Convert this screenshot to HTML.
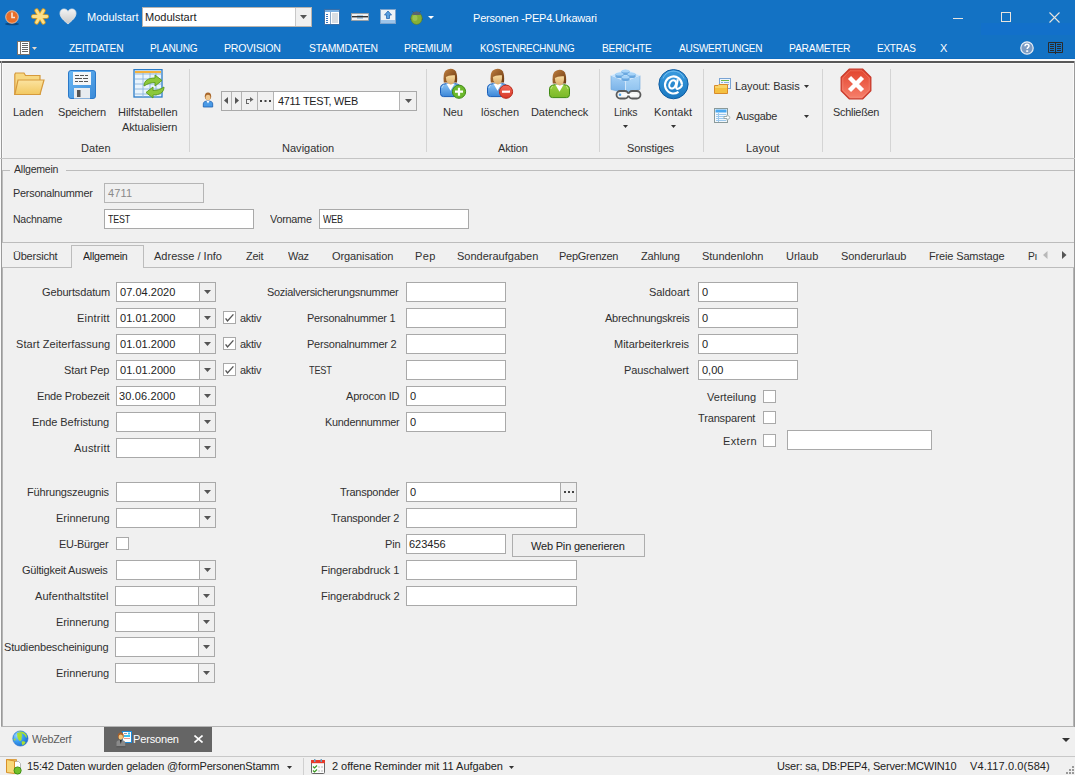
<!DOCTYPE html>
<html><head><meta charset="utf-8"><style>
html,body{margin:0;padding:0;width:1075px;height:775px;overflow:hidden;background:#f0f0f0;position:relative}
div{box-sizing:border-box}
.t{position:absolute;font-family:"Liberation Sans",sans-serif;font-size:11px;line-height:13px;white-space:nowrap}
svg{position:absolute}
</style></head><body>
<div style="position:absolute;left:0px;top:0px;width:1075px;height:59px;background:#1372c4"></div><div style="position:absolute;left:0px;top:58px;width:1075px;height:1px;background:#0f6cc0"></div><div style="position:absolute;left:981px;top:23px;width:94px;height:12px;background:#1270ca"></div><div style="position:absolute;left:0px;top:59px;width:1075px;height:2px;background:#fcfcfc"></div><div style="position:absolute;left:0px;top:61px;width:1075px;height:2px;background:#585858"></div><div style="position:absolute;left:0px;top:63px;width:1075px;height:1px;background:#f8f8f8"></div><div style="position:absolute;left:0px;top:63px;width:1px;height:664px;background:#fafafa"></div><div style="position:absolute;left:1px;top:61px;width:1px;height:666px;background:#9a9a9a"></div><div style="position:absolute;left:2px;top:63px;width:1px;height:95px;background:#f8f8f8"></div><div style="position:absolute;left:1074px;top:61px;width:1px;height:666px;background:#9a9a9a"></div><div style="position:absolute;left:1073px;top:63px;width:1px;height:95px;background:#f8f8f8"></div><div style="position:absolute;left:142px;top:7px;width:170px;height:20px;background:#fff;border:1px solid #b9b4ae;box-sizing:border-box"></div><div style="position:absolute;left:295px;top:8px;width:16px;height:18px;background:#f0f0f0;border-left:1px solid #c8c8c8;box-sizing:border-box"></div><svg style="position:absolute;left:300px;top:15px" width="7" height="4"><path d="M0 0H7L3.5 4Z" fill="#555"/></svg><div style="position:absolute;left:953px;top:18px;width:10px;height:1px;background:#e8e4df"></div><div style="position:absolute;left:1001px;top:12px;width:10px;height:10px;border:1px solid #e8e4df;box-sizing:border-box"></div><svg style="position:absolute;left:1049px;top:12px" width="11" height="11"><path d="M0.5 0.5L10.5 10.5M10.5 0.5L0.5 10.5" stroke="#e8e4df" stroke-width="1.1"/></svg><div style="position:absolute;left:0px;top:158px;width:1075px;height:1px;background:#c4c4c4"></div><div style="position:absolute;left:189px;top:69px;width:1px;height:83px;background:#d4d4d4"></div><div style="position:absolute;left:426px;top:69px;width:1px;height:83px;background:#d4d4d4"></div><div style="position:absolute;left:599px;top:69px;width:1px;height:83px;background:#d4d4d4"></div><div style="position:absolute;left:703px;top:69px;width:1px;height:83px;background:#d4d4d4"></div><div style="position:absolute;left:822px;top:69px;width:1px;height:83px;background:#d4d4d4"></div><div style="position:absolute;left:890px;top:69px;width:1px;height:83px;background:#d4d4d4"></div><div style="position:absolute;left:221px;top:91px;width:196px;height:20px;background:#fff;border:1px solid #a9a9a9;box-sizing:border-box"></div><div style="position:absolute;left:222px;top:92px;width:51px;height:18px;background:#f0f0f0"></div><div style="position:absolute;left:231px;top:92px;width:1px;height:18px;background:#b4b4b4"></div><div style="position:absolute;left:241px;top:92px;width:1px;height:18px;background:#b4b4b4"></div><div style="position:absolute;left:257px;top:92px;width:1px;height:18px;background:#b4b4b4"></div><div style="position:absolute;left:273px;top:92px;width:1px;height:18px;background:#b4b4b4"></div><div style="position:absolute;left:399px;top:92px;width:1px;height:18px;background:#b4b4b4"></div><div style="position:absolute;left:400px;top:92px;width:16px;height:18px;background:#f0f0f0"></div><div style="position:absolute;left:2px;top:170px;width:8px;height:1px;background:#bcbcbc"></div><div style="position:absolute;left:66px;top:170px;width:1008px;height:1px;background:#bcbcbc"></div><div style="position:absolute;left:2px;top:170px;width:1px;height:73px;background:#bcbcbc"></div><div style="position:absolute;left:2px;top:242px;width:1072px;height:1px;background:#bcbcbc"></div><div style="position:absolute;left:104px;top:183px;width:100px;height:20px;background:#f0f0f0;border:1px solid #b5b5b5;box-sizing:border-box"></div><div style="position:absolute;left:104px;top:209px;width:150px;height:20px;background:#fff;border:1px solid #a9a9a9;box-sizing:border-box"></div><div style="position:absolute;left:319px;top:209px;width:150px;height:20px;background:#fff;border:1px solid #a9a9a9;box-sizing:border-box"></div><div style="position:absolute;left:2px;top:267px;width:1072px;height:1px;background:#bcbcbc"></div><div style="position:absolute;left:71px;top:245px;width:73px;height:23px;background:#f0f0f0;border:1px solid #bcbcbc;border-bottom:none;box-sizing:border-box"></div><svg style="position:absolute;left:1043px;top:251px" width="5" height="8"><path d="M4.5 0V8L0 4Z" fill="#b8b8b8"/></svg><svg style="position:absolute;left:1062px;top:251px" width="5" height="8"><path d="M0 0V8L4.5 4Z" fill="#555"/></svg><div style="position:absolute;left:2px;top:268px;width:1px;height:459px;background:#b4b4b4"></div><div style="position:absolute;left:1073px;top:268px;width:1px;height:459px;background:#b4b4b4"></div><div style="position:absolute;left:1px;top:726px;width:1073px;height:1px;background:#b4b4b4"></div><div style="position:absolute;left:116px;top:282px;width:100px;height:20px;background:#fff;border:1px solid #a9a9a9;box-sizing:border-box"></div><div style="position:absolute;left:199px;top:283px;width:16px;height:18px;background:#f0f0f0;border-left:1px solid #a9a9a9;box-sizing:border-box"></div><svg style="position:absolute;left:204px;top:290px" width="7" height="4"><path d="M0 0H7L3.5 4Z" fill="#555"/></svg><div style="position:absolute;left:116px;top:308px;width:100px;height:20px;background:#fff;border:1px solid #a9a9a9;box-sizing:border-box"></div><div style="position:absolute;left:199px;top:309px;width:16px;height:18px;background:#f0f0f0;border-left:1px solid #a9a9a9;box-sizing:border-box"></div><svg style="position:absolute;left:204px;top:316px" width="7" height="4"><path d="M0 0H7L3.5 4Z" fill="#555"/></svg><div style="position:absolute;left:223px;top:311px;width:13px;height:13px;background:#fff;border:1px solid #a9a9a9;box-sizing:border-box"></div><svg style="position:absolute;left:223px;top:311px" width="13" height="13"><path d="M2.6 7.4L4.5 9.9L10.4 3.4" stroke="#555" stroke-width="1.4" fill="none"/></svg><div style="position:absolute;left:116px;top:334px;width:100px;height:20px;background:#fff;border:1px solid #a9a9a9;box-sizing:border-box"></div><div style="position:absolute;left:199px;top:335px;width:16px;height:18px;background:#f0f0f0;border-left:1px solid #a9a9a9;box-sizing:border-box"></div><svg style="position:absolute;left:204px;top:342px" width="7" height="4"><path d="M0 0H7L3.5 4Z" fill="#555"/></svg><div style="position:absolute;left:223px;top:337px;width:13px;height:13px;background:#fff;border:1px solid #a9a9a9;box-sizing:border-box"></div><svg style="position:absolute;left:223px;top:337px" width="13" height="13"><path d="M2.6 7.4L4.5 9.9L10.4 3.4" stroke="#555" stroke-width="1.4" fill="none"/></svg><div style="position:absolute;left:116px;top:360px;width:100px;height:20px;background:#fff;border:1px solid #a9a9a9;box-sizing:border-box"></div><div style="position:absolute;left:199px;top:361px;width:16px;height:18px;background:#f0f0f0;border-left:1px solid #a9a9a9;box-sizing:border-box"></div><svg style="position:absolute;left:204px;top:368px" width="7" height="4"><path d="M0 0H7L3.5 4Z" fill="#555"/></svg><div style="position:absolute;left:223px;top:363px;width:13px;height:13px;background:#fff;border:1px solid #a9a9a9;box-sizing:border-box"></div><svg style="position:absolute;left:223px;top:363px" width="13" height="13"><path d="M2.6 7.4L4.5 9.9L10.4 3.4" stroke="#555" stroke-width="1.4" fill="none"/></svg><div style="position:absolute;left:116px;top:386px;width:100px;height:20px;background:#fff;border:1px solid #a9a9a9;box-sizing:border-box"></div><div style="position:absolute;left:199px;top:387px;width:16px;height:18px;background:#f0f0f0;border-left:1px solid #a9a9a9;box-sizing:border-box"></div><svg style="position:absolute;left:204px;top:394px" width="7" height="4"><path d="M0 0H7L3.5 4Z" fill="#555"/></svg><div style="position:absolute;left:116px;top:412px;width:100px;height:20px;background:#fff;border:1px solid #a9a9a9;box-sizing:border-box"></div><div style="position:absolute;left:199px;top:413px;width:16px;height:18px;background:#f0f0f0;border-left:1px solid #a9a9a9;box-sizing:border-box"></div><svg style="position:absolute;left:204px;top:420px" width="7" height="4"><path d="M0 0H7L3.5 4Z" fill="#555"/></svg><div style="position:absolute;left:116px;top:438px;width:100px;height:20px;background:#fff;border:1px solid #a9a9a9;box-sizing:border-box"></div><div style="position:absolute;left:199px;top:439px;width:16px;height:18px;background:#f0f0f0;border-left:1px solid #a9a9a9;box-sizing:border-box"></div><svg style="position:absolute;left:204px;top:446px" width="7" height="4"><path d="M0 0H7L3.5 4Z" fill="#555"/></svg><div style="position:absolute;left:406px;top:282px;width:100px;height:20px;background:#fff;border:1px solid #a9a9a9;box-sizing:border-box"></div><div style="position:absolute;left:406px;top:308px;width:100px;height:20px;background:#fff;border:1px solid #a9a9a9;box-sizing:border-box"></div><div style="position:absolute;left:406px;top:334px;width:100px;height:20px;background:#fff;border:1px solid #a9a9a9;box-sizing:border-box"></div><div style="position:absolute;left:406px;top:360px;width:100px;height:20px;background:#fff;border:1px solid #a9a9a9;box-sizing:border-box"></div><div style="position:absolute;left:406px;top:386px;width:100px;height:20px;background:#fff;border:1px solid #a9a9a9;box-sizing:border-box"></div><div style="position:absolute;left:406px;top:412px;width:100px;height:20px;background:#fff;border:1px solid #a9a9a9;box-sizing:border-box"></div><div style="position:absolute;left:698px;top:282px;width:100px;height:20px;background:#fff;border:1px solid #a9a9a9;box-sizing:border-box"></div><div style="position:absolute;left:698px;top:308px;width:100px;height:20px;background:#fff;border:1px solid #a9a9a9;box-sizing:border-box"></div><div style="position:absolute;left:698px;top:334px;width:100px;height:20px;background:#fff;border:1px solid #a9a9a9;box-sizing:border-box"></div><div style="position:absolute;left:698px;top:360px;width:100px;height:20px;background:#fff;border:1px solid #a9a9a9;box-sizing:border-box"></div><div style="position:absolute;left:763px;top:390px;width:13px;height:13px;background:#fff;border:1px solid #a9a9a9;box-sizing:border-box"></div><div style="position:absolute;left:763px;top:411px;width:13px;height:13px;background:#fff;border:1px solid #a9a9a9;box-sizing:border-box"></div><div style="position:absolute;left:763px;top:434px;width:13px;height:13px;background:#fff;border:1px solid #a9a9a9;box-sizing:border-box"></div><div style="position:absolute;left:787px;top:430px;width:145px;height:20px;background:#fff;border:1px solid #a9a9a9;box-sizing:border-box"></div><div style="position:absolute;left:116px;top:482px;width:100px;height:20px;background:#fff;border:1px solid #a9a9a9;box-sizing:border-box"></div><div style="position:absolute;left:199px;top:483px;width:16px;height:18px;background:#f0f0f0;border-left:1px solid #a9a9a9;box-sizing:border-box"></div><svg style="position:absolute;left:204px;top:490px" width="7" height="4"><path d="M0 0H7L3.5 4Z" fill="#555"/></svg><div style="position:absolute;left:116px;top:508px;width:100px;height:20px;background:#fff;border:1px solid #a9a9a9;box-sizing:border-box"></div><div style="position:absolute;left:199px;top:509px;width:16px;height:18px;background:#f0f0f0;border-left:1px solid #a9a9a9;box-sizing:border-box"></div><svg style="position:absolute;left:204px;top:516px" width="7" height="4"><path d="M0 0H7L3.5 4Z" fill="#555"/></svg><div style="position:absolute;left:116px;top:537px;width:13px;height:13px;background:#fff;border:1px solid #a9a9a9;box-sizing:border-box"></div><div style="position:absolute;left:116px;top:560px;width:100px;height:20px;background:#fff;border:1px solid #a9a9a9;box-sizing:border-box"></div><div style="position:absolute;left:199px;top:561px;width:16px;height:18px;background:#f0f0f0;border-left:1px solid #a9a9a9;box-sizing:border-box"></div><svg style="position:absolute;left:204px;top:568px" width="7" height="4"><path d="M0 0H7L3.5 4Z" fill="#555"/></svg><div style="position:absolute;left:115px;top:586px;width:100px;height:20px;background:#fff;border:1px solid #a9a9a9;box-sizing:border-box"></div><div style="position:absolute;left:198px;top:587px;width:16px;height:18px;background:#f0f0f0;border-left:1px solid #a9a9a9;box-sizing:border-box"></div><svg style="position:absolute;left:203px;top:594px" width="7" height="4"><path d="M0 0H7L3.5 4Z" fill="#555"/></svg><div style="position:absolute;left:115px;top:612px;width:100px;height:20px;background:#fff;border:1px solid #a9a9a9;box-sizing:border-box"></div><div style="position:absolute;left:198px;top:613px;width:16px;height:18px;background:#f0f0f0;border-left:1px solid #a9a9a9;box-sizing:border-box"></div><svg style="position:absolute;left:203px;top:620px" width="7" height="4"><path d="M0 0H7L3.5 4Z" fill="#555"/></svg><div style="position:absolute;left:115px;top:637px;width:100px;height:20px;background:#fff;border:1px solid #a9a9a9;box-sizing:border-box"></div><div style="position:absolute;left:198px;top:638px;width:16px;height:18px;background:#f0f0f0;border-left:1px solid #a9a9a9;box-sizing:border-box"></div><svg style="position:absolute;left:203px;top:645px" width="7" height="4"><path d="M0 0H7L3.5 4Z" fill="#555"/></svg><div style="position:absolute;left:115px;top:663px;width:100px;height:20px;background:#fff;border:1px solid #a9a9a9;box-sizing:border-box"></div><div style="position:absolute;left:198px;top:664px;width:16px;height:18px;background:#f0f0f0;border-left:1px solid #a9a9a9;box-sizing:border-box"></div><svg style="position:absolute;left:203px;top:671px" width="7" height="4"><path d="M0 0H7L3.5 4Z" fill="#555"/></svg><div style="position:absolute;left:406px;top:482px;width:171px;height:20px;background:#fff;border:1px solid #a9a9a9;box-sizing:border-box"></div><div style="position:absolute;left:560px;top:483px;width:16px;height:18px;background:#f0f0f0;border-left:1px solid #a9a9a9;box-sizing:border-box"></div><svg style="position:absolute;left:564px;top:491px" width="10" height="2"><rect x="0" y="0" width="2" height="2" fill="#444"/><rect x="4" y="0" width="2" height="2" fill="#444"/><rect x="8" y="0" width="2" height="2" fill="#444"/></svg><div style="position:absolute;left:406px;top:508px;width:171px;height:20px;background:#fff;border:1px solid #a9a9a9;box-sizing:border-box"></div><div style="position:absolute;left:406px;top:534px;width:100px;height:20px;background:#fff;border:1px solid #a9a9a9;box-sizing:border-box"></div><div style="position:absolute;left:406px;top:560px;width:171px;height:20px;background:#fff;border:1px solid #a9a9a9;box-sizing:border-box"></div><div style="position:absolute;left:406px;top:586px;width:171px;height:20px;background:#fff;border:1px solid #a9a9a9;box-sizing:border-box"></div><div style="position:absolute;left:512px;top:534px;width:133px;height:23px;background:#efefef;border:1px solid #adadad;box-sizing:border-box"></div><div style="position:absolute;left:104px;top:727px;width:108px;height:25px;background:#656565"></div><svg style="position:absolute;left:194px;top:735px" width="9" height="8"><path d="M0.5 0.5L8.5 7.5M8.5 0.5L0.5 7.5" stroke="#fff" stroke-width="1.6"/></svg><svg style="position:absolute;left:1062px;top:738px" width="8" height="4"><path d="M0 0H8L4 4Z" fill="#333"/></svg><div style="position:absolute;left:0px;top:756px;width:1075px;height:1px;background:#c8c8c8"></div><svg style="position:absolute;left:287px;top:766px" width="5" height="3"><path d="M0 0H5L2.5 3Z" fill="#333"/></svg><div style="position:absolute;left:303px;top:758px;width:1px;height:17px;background:#d0d0d0"></div><svg style="position:absolute;left:509px;top:766px" width="5" height="3"><path d="M0 0H5L2.5 3Z" fill="#333"/></svg>
<!-- title bar icons -->
<svg style="left:4px;top:9px" width="17" height="17" viewBox="0 0 17 17">
 <ellipse cx="8" cy="15" rx="7" ry="1.3" fill="#0b3f73" opacity="0.8"/>
 <circle cx="8" cy="8" r="6.3" fill="#e96e2a" stroke="#f6d2b6" stroke-width="0.8"/>
 <path d="M8 3.5V8.5H11" stroke="#f5e6dc" stroke-width="1.6" fill="none"/>
</svg>
<svg style="left:31px;top:8px" width="18" height="17" viewBox="0 0 18 17">
 <g stroke="#e0a020" stroke-width="4.4" stroke-linecap="round"><path d="M2.2 8.5H15.8M5.6 2.6L12.4 14.4M12.4 2.6L5.6 14.4"/></g>
 <g stroke="#fbe08a" stroke-width="2.8" stroke-linecap="round"><path d="M2.2 8.5H15.8M5.6 2.6L12.4 14.4M12.4 2.6L5.6 14.4"/></g>
</svg>
<svg style="left:59px;top:8px" width="18" height="17" viewBox="0 0 18 17">
 <defs><linearGradient id="hg" x1="0" y1="0" x2="0" y2="1"><stop offset="0" stop-color="#f4f4f4"/><stop offset="1" stop-color="#c8c8c8"/></linearGradient></defs>
 <path d="M9 16C5 12.5 1 9.5 1 5.2C1 2.5 3 1 5 1C7 1 8.3 2.2 9 3.5C9.7 2.2 11 1 13 1C15 1 17 2.5 17 5.2C17 9.5 13 12.5 9 16Z" fill="url(#hg)" stroke="#e6e6e6" stroke-width="0.8"/>
</svg>
<svg style="left:324px;top:9px" width="16" height="16" viewBox="0 0 16 16">
 <rect x="0.5" y="0.5" width="15" height="15" fill="#fff" stroke="#3a6fa8" stroke-width="1"/>
 <rect x="1" y="1" width="14" height="2" fill="#79aee0"/>
 <rect x="6" y="3" width="1" height="12" fill="#8aa8c8"/>
 <rect x="8" y="4" width="6" height="10" fill="#d9dde2"/>
 <g fill="#3a78c0"><rect x="2" y="5" width="2" height="1"/><rect x="2" y="7" width="2" height="1"/><rect x="2" y="9" width="2" height="1"/><rect x="2" y="11" width="2" height="1"/><rect x="2" y="13" width="2" height="1"/></g>
</svg>
<svg style="left:351px;top:13px" width="18" height="8" viewBox="0 0 18 8">
 <rect x="0.5" y="0.5" width="17" height="7" fill="#f0f0f0" stroke="#9c9c9c" stroke-width="0.8"/>
 <rect x="6" y="2" width="6" height="4" fill="#a8c8e0"/>
 <rect x="1" y="3" width="16" height="1.4" fill="#333"/>
</svg>
<svg style="left:380px;top:9px" width="16" height="15" viewBox="0 0 16 15">
 <rect x="0.5" y="0.5" width="15" height="14" fill="#eef2f6" stroke="#7ea4cc" stroke-width="1"/>
 <rect x="1" y="11" width="14" height="3" fill="#9cc4ea"/>
 <path d="M8 2L4.5 6H6.5V9.5H9.5V6H11.5Z" fill="#5aa0e0" stroke="#2a68b0" stroke-width="0.8"/>
</svg>
<svg style="left:409px;top:9px" width="15" height="16" viewBox="0 0 15 16">
 <path d="M3.5 2.5L5 4M11.5 2.5L10 4" stroke="#3a4048" stroke-width="0.8"/>
 <path d="M1 10H3M12 10H14" stroke="#3a4048" stroke-width="0.8"/>
 <ellipse cx="7.5" cy="9.3" rx="5.6" ry="6.2" fill="#86b036" stroke="#5a7a20" stroke-width="0.6"/>
 <path d="M3 5.5C3.5 3.5 5 2.5 7.5 2.5C10 2.5 11.5 3.5 12 5.5C10.5 6.2 4.5 6.2 3 5.5Z" fill="#5a6470"/>
 <ellipse cx="6" cy="9" rx="2.5" ry="3" fill="#b4d468" opacity="0.5"/>
</svg>
<svg style="left:428px;top:16px" width="6" height="3"><path d="M0 0H6L3 3Z" fill="#fff"/></svg>
<!-- menu icons -->
<svg style="left:17px;top:41px" width="13" height="14" viewBox="0 0 13 14">
 <rect x="0.5" y="0.5" width="12" height="13" fill="#fff" stroke="#7c736c" stroke-width="1"/>
 <rect x="3" y="1" width="1" height="12" fill="#7c736c"/>
 <g fill="#666"><rect x="5" y="2" width="6" height="1"/><rect x="5" y="4" width="6" height="1"/><rect x="5" y="6" width="6" height="1"/><rect x="5" y="8" width="6" height="1"/><rect x="5" y="10" width="6" height="1"/></g>
</svg>
<svg style="left:32px;top:47px" width="5" height="3"><path d="M0 0H5L2.5 3Z" fill="#e6d8cc"/></svg>
<svg style="left:1020px;top:41px" width="14" height="14" viewBox="0 0 14 14">
 <circle cx="7" cy="7" r="6.2" fill="#7c9cc4" stroke="#e8eef6" stroke-width="1.2"/>
 <path d="M5 5.2C5 3.8 6 3.2 7 3.2C8.2 3.2 9 4 9 5C9 6.3 7.2 6.5 7.2 8" stroke="#fff" stroke-width="1.5" fill="none"/>
 <rect x="6.2" y="9.3" width="2" height="1.6" fill="#fff"/>
</svg>
<svg style="left:1048px;top:42px" width="15" height="12" viewBox="0 0 15 12">
 <path d="M0.5 0.5H14.5V10.5H0.5Z" fill="none" stroke="#2b2b2b" stroke-width="1"/>
 <rect x="7" y="0" width="1" height="12" fill="#2b2b2b"/>
 <g fill="#2b2b2b"><rect x="2" y="2" width="4" height="1"/><rect x="2" y="4" width="4" height="1"/><rect x="2" y="6" width="4" height="1"/><rect x="2" y="8" width="4" height="1"/>
 <rect x="9" y="2" width="4" height="1"/><rect x="9" y="4" width="4" height="1"/><rect x="9" y="6" width="4" height="1"/><rect x="9" y="8" width="4" height="1"/></g>
</svg>
<!-- ribbon icons -->
<svg style="left:14px;top:72px" width="31" height="24" viewBox="0 0 31 24">
 <defs><linearGradient id="fg" x1="0" y1="0" x2="0" y2="1"><stop offset="0" stop-color="#fbe3a0"/><stop offset="1" stop-color="#f2c860"/></linearGradient></defs>
 <path d="M0.8 2.5V22.5H26V3.5H11.5L10 1H1.5Z" fill="#f7d882" stroke="#d69a3c" stroke-width="1.2"/>
 <path d="M0.8 22.5L4 8H30L26 22.5Z" fill="url(#fg)" stroke="#d69a3c" stroke-width="1.2"/>
</svg>
<svg style="left:68px;top:70px" width="28" height="29" viewBox="0 0 28 29">
 <defs><linearGradient id="flp" x1="0" y1="0" x2="1" y2="1"><stop offset="0" stop-color="#6ab8f4"/><stop offset="1" stop-color="#3a8ad8"/></linearGradient></defs><rect x="0.5" y="0.5" width="27" height="28" rx="2.5" fill="url(#flp)" stroke="#2a78c8" stroke-width="1"/>
 <rect x="5" y="2" width="18" height="13" fill="#f4f6f8"/>
 <g fill="#555"><rect x="7" y="5" width="4" height="1"/><rect x="12" y="5" width="4" height="1"/><rect x="17" y="5" width="3" height="1"/><rect x="7" y="8" width="7" height="1"/><rect x="15" y="8" width="5" height="1"/><rect x="7" y="11" width="3" height="1"/><rect x="11" y="11" width="4" height="1"/><rect x="16" y="11" width="4" height="1"/></g>
 <rect x="6" y="18" width="16" height="10.5" fill="#e8ecf0"/>
 <rect x="9" y="20" width="3.5" height="7" fill="#555"/>
</svg>
<svg style="left:133px;top:69px" width="32" height="31" viewBox="0 0 32 31">
 <rect x="1" y="0.6" width="28" height="27.4" fill="#eaf4fc" stroke="#2a7cc8" stroke-width="1.3"/>
 <rect x="2" y="2" width="26" height="2.2" fill="#f6b23a"/>
 <g stroke="#8cb4dc" stroke-width="0.9"><path d="M2 5H28M2 10H28M2 15H28M2 20H28M2 25H28M10 4V28M17 4V28M23 4V28"/></g>
 <path d="M11 17C11 11 16 9 22 9V6L29 11.5L22 17V13.5C18 13.5 15 14.5 11 17Z" fill="#8cc83a" stroke="#5a9a1a" stroke-width="0.9"/>
 <path d="M31 18C31 24 26 26 20 26V29L13 23.5L20 18V21.5C24 21.5 27 20.5 31 18Z" fill="#8cc83a" stroke="#5a9a1a" stroke-width="0.9"/>
</svg>
<svg style="left:202px;top:92px" width="12" height="16" viewBox="0 0 12 16">
 <ellipse cx="6" cy="4.3" rx="3.2" ry="3.8" fill="#a8662a"/>
 <ellipse cx="6" cy="5.6" rx="2.4" ry="2.8" fill="#f0c890"/>
 <path d="M1.3 15V11.8C1.3 9.8 3.3 9 6 9C8.7 9 10.7 9.8 10.7 11.8V15Z" fill="#4a9ae6" stroke="#1a5eb0" stroke-width="0.8"/>
 <path d="M4.5 9L6 11.5L7.5 9Z" fill="#fff"/>
</svg>
<!-- nav buttons -->
<svg style="left:224px;top:97px" width="5" height="8"><path d="M4 0V7L0 3.5Z" fill="#555"/></svg>
<svg style="left:235px;top:97px" width="5" height="8"><path d="M0 0V7L4 3.5Z" fill="#555"/></svg>
<svg style="left:246px;top:97px" width="8" height="8" viewBox="0 0 8 8"><g fill="#666"><rect x="0" y="2" width="5" height="1"/><rect x="0" y="2" width="1" height="5"/><rect x="0" y="6" width="3" height="1"/><path d="M4 0L7.5 2.5L4 5Z"/></g></svg>
<svg style="left:260px;top:100px" width="11" height="2"><rect x="0" width="2" height="2" fill="#444"/><rect x="4.5" width="2" height="2" fill="#444"/><rect x="9" width="2" height="2" fill="#444"/></svg>
<svg style="left:405px;top:99px" width="7" height="4"><path d="M0 0H7L3.5 4Z" fill="#555"/></svg>
<svg width="0" height="0" style="position:absolute"><defs>
 <linearGradient id="hair" x1="0" y1="0" x2="1" y2="1"><stop offset="0" stop-color="#c08040"/><stop offset="1" stop-color="#6a3810"/></linearGradient>
 <linearGradient id="skin" x1="0" y1="0" x2="0" y2="1"><stop offset="0" stop-color="#f8dca0"/><stop offset="1" stop-color="#d8a868"/></linearGradient>
 <linearGradient id="bblue" x1="0" y1="0" x2="0" y2="1"><stop offset="0" stop-color="#8cc4f4"/><stop offset="1" stop-color="#3a86d8"/></linearGradient>
 <linearGradient id="bgreen" x1="0" y1="0" x2="0" y2="1"><stop offset="0" stop-color="#9ad040"/><stop offset="1" stop-color="#7ab828"/></linearGradient>
 <linearGradient id="brick" x1="0" y1="0" x2="0" y2="1"><stop offset="0" stop-color="#b8dcf8"/><stop offset="1" stop-color="#78b0e4"/></linearGradient>
 <radialGradient id="atg" cx="0.4" cy="0.3" r="0.8"><stop offset="0" stop-color="#3a9ae0"/><stop offset="1" stop-color="#0c5aa8"/></radialGradient>
 <linearGradient id="redg" x1="0" y1="0" x2="0" y2="1"><stop offset="0" stop-color="#f26a5a"/><stop offset="1" stop-color="#d83828"/></linearGradient>
</defs></svg>
<!-- Neu -->
<svg style="left:439px;top:68px" width="29" height="32" viewBox="0 0 29 32">
 <path d="M1.5 25.5Q1.5 28.6 4.5 28.6H18.5Q21.5 28.6 21.5 25.5V19.8Q21.5 17 18.5 16.2L15.5 15.6H7.5L4.5 16.2Q1.5 17 1.5 19.8Z" fill="url(#bblue)" stroke="#1a5eb8" stroke-width="1"/>
 <path d="M3 20Q3 17.8 5 17.3M19.8 20Q19.8 17.8 18 17.3" stroke="#cfe6fb" stroke-width="0.8" fill="none" opacity="0.8"/>
 <rect x="9.3" y="12" width="4.4" height="5" fill="#d8a868"/>
 <path d="M7.3 15.6L11.5 22.8L15.7 15.6Z" fill="#fff"/>
 <path d="M4.8 14.5Q3.8 5 6.8 2.6Q11 -0.6 15.6 2Q18.8 4.5 18 14.5Z" fill="url(#hair)"/>
 <path d="M6.9 9Q9.5 6.8 15.9 7.2Q16.3 12.8 14.6 15Q12.8 16.8 11.3 16.6Q8.5 16 7.3 12.5Z" fill="url(#skin)"/>
 <circle cx="20" cy="23.7" r="6.6" fill="#6cb82c" stroke="#3e8a14" stroke-width="1"/>
 <path d="M20 19.7V27.7M16 23.7H24" stroke="#fff" stroke-width="2.2"/>
</svg>
<!-- löschen -->
<svg style="left:486px;top:68px" width="29" height="32" viewBox="0 0 29 32">
 <path d="M1.5 25.5Q1.5 28.6 4.5 28.6H18.5Q21.5 28.6 21.5 25.5V19.8Q21.5 17 18.5 16.2L15.5 15.6H7.5L4.5 16.2Q1.5 17 1.5 19.8Z" fill="url(#bblue)" stroke="#1a5eb8" stroke-width="1"/>
 <path d="M3 20Q3 17.8 5 17.3M19.8 20Q19.8 17.8 18 17.3" stroke="#cfe6fb" stroke-width="0.8" fill="none" opacity="0.8"/>
 <rect x="9.3" y="12" width="4.4" height="5" fill="#d8a868"/>
 <path d="M7.3 15.6L11.5 22.8L15.7 15.6Z" fill="#fff"/>
 <path d="M4.8 14.5Q3.8 5 6.8 2.6Q11 -0.6 15.6 2Q18.8 4.5 18 14.5Z" fill="url(#hair)"/>
 <path d="M6.9 9Q9.5 6.8 15.9 7.2Q16.3 12.8 14.6 15Q12.8 16.8 11.3 16.6Q8.5 16 7.3 12.5Z" fill="url(#skin)"/>
 <circle cx="20" cy="23.7" r="6.6" fill="url(#redg)" stroke="#b82818" stroke-width="1"/>
 <path d="M16 23.7H24" stroke="#fff" stroke-width="2.2"/>
</svg>
<!-- Datencheck -->
<svg style="left:548px;top:69px" width="23" height="30" viewBox="0 0 23 30">
 <path d="M1.5 25.5Q1.5 28.6 4.5 28.6H18.5Q21.5 28.6 21.5 25.5V19.8Q21.5 17 18.5 16.2L15.5 15.6H7.5L4.5 16.2Q1.5 17 1.5 19.8Z" fill="url(#bgreen)" stroke="#3f8a14" stroke-width="1"/>
 <path d="M3 20Q3 17.8 5 17.3M19.8 20Q19.8 17.8 18 17.3" stroke="#d8f0a8" stroke-width="0.8" fill="none" opacity="0.8"/>
 <rect x="9.3" y="12" width="4.4" height="5" fill="#d8a868"/>
 <path d="M7.3 15.6L11.5 22.8L15.7 15.6Z" fill="#fff"/>
 <path d="M4.8 14.5Q3.8 5 6.8 2.6Q11 -0.6 15.6 2Q18.8 4.5 18 14.5Z" fill="url(#hair)"/>
 <path d="M6.9 9Q9.5 6.8 15.9 7.2Q16.3 12.8 14.6 15Q12.8 16.8 11.3 16.6Q8.5 16 7.3 12.5Z" fill="url(#skin)"/>
</svg>
<!-- Links -->
<svg style="left:610px;top:68px" width="33" height="32" viewBox="0 0 33 32">
 <defs><linearGradient id="lf" x1="0" y1="0" x2="0" y2="1"><stop offset="0" stop-color="#a4d0f6"/><stop offset="1" stop-color="#74aee6"/></linearGradient>
 <linearGradient id="rf" x1="0" y1="0" x2="0" y2="1"><stop offset="0" stop-color="#b0d8f8"/><stop offset="1" stop-color="#8cc0ee"/></linearGradient></defs>
 <path d="M1 7.5L15.5 13.5V25L1 21.5Z" fill="url(#lf)" stroke="#6aa4dc" stroke-width="0.6"/>
 <path d="M30 7.5L15.5 13.5V25L30 21.5Z" fill="url(#rf)" stroke="#6aa4dc" stroke-width="0.6"/>
 <path d="M1 7.5L15.5 1.5L30 7.5L15.5 13.5Z" fill="#c4e2fa" stroke="#e0f0ff" stroke-width="0.6"/>
 <path d="M15.5 13.5V25" stroke="#e8f4ff" stroke-width="0.8"/>
 <g fill="#6aa8e0"><rect x="11.5" y="3" width="8" height="2.5"/><rect x="5.5" y="6" width="8" height="2.5"/><rect x="17.5" y="6" width="8" height="2.5"/><rect x="11.5" y="9" width="8" height="2.5"/></g>
 <g fill="#6aa8e0"><ellipse cx="15.5" cy="5.5" rx="4" ry="1.6"/><ellipse cx="9.5" cy="8.5" rx="4" ry="1.6"/><ellipse cx="21.5" cy="8.5" rx="4" ry="1.6"/><ellipse cx="15.5" cy="11.5" rx="4" ry="1.6"/></g>
 <g fill="#a8d4f8"><ellipse cx="15.5" cy="3" rx="4" ry="1.6"/><ellipse cx="9.5" cy="6" rx="4" ry="1.6"/><ellipse cx="21.5" cy="6" rx="4" ry="1.6"/><ellipse cx="15.5" cy="9" rx="4" ry="1.6"/></g>
 <g fill="#f4f4f4" stroke="#5a5a5a" stroke-width="1.8"><rect x="6.5" y="23" width="12" height="7.5" rx="3.7"/><rect x="18.5" y="23" width="12" height="7.5" rx="3.7"/></g>
 <path d="M10 26.7H27" stroke="#fff" stroke-width="1.6"/>
 <circle cx="10" cy="26.7" r="1.3" fill="#4aa4ee"/>
</svg>
<!-- Kontakt -->
<svg style="left:658px;top:69px" width="31" height="31" viewBox="0 0 31 31">
 <defs><linearGradient id="atl" x1="0" y1="0" x2="0" y2="1"><stop offset="0" stop-color="#3a9ce0"/><stop offset="1" stop-color="#1a78c0"/></linearGradient></defs>
 <circle cx="15.5" cy="15.2" r="14.6" fill="url(#atl)" stroke="#0c5aa0" stroke-width="1"/>
 <path d="M5 9.5C7 4.5 11 2.2 15.5 2.2C20 2.2 24 4.5 26 9.5" stroke="#8ccaf4" stroke-width="0.9" fill="none" opacity="0.8"/>
 <g stroke="#fff" stroke-width="2.1" fill="none">
  <path d="M24 15.5A8.5 8.5 0 1 0 20.5 22.8"/>
  <ellipse cx="14.6" cy="15.4" rx="3.1" ry="4.3" transform="rotate(25 14.6 15.4)"/>
  <path d="M19.8 10.2L18.2 18.6Q18.5 20.4 20.6 19.6Q24 18 24 15.5"/>
 </g>
</svg>
<svg style="left:623px;top:125px" width="5" height="3"><path d="M0 0H5L2.5 3Z" fill="#333"/></svg>
<svg style="left:671px;top:125px" width="5" height="3"><path d="M0 0H5L2.5 3Z" fill="#333"/></svg>
<!-- Layout -->
<svg style="left:713px;top:77px" width="18" height="18" viewBox="0 0 18 18">
 <rect x="6.5" y="1.5" width="11" height="10" fill="#eef4fc" stroke="#7aa4d4" stroke-width="1"/>
 <rect x="8" y="3" width="8" height="1" fill="#6ab84a"/>
 <g fill="#8ab0dc"><rect x="8" y="5" width="2" height="1"/><rect x="11" y="5" width="5" height="1"/><rect x="8" y="7" width="2" height="1"/><rect x="11" y="7" width="5" height="1"/></g>
 <path d="M1.5 16.5V8.5H5L6 7.5H14.5V16.5Z" fill="#f8d468" stroke="#d88a2a" stroke-width="1"/>
 <rect x="2" y="11" width="12" height="5" fill="#f4c040"/>
</svg>
<svg style="left:804px;top:85px" width="5" height="3"><path d="M0 0H5L2.5 3Z" fill="#333"/></svg>
<!-- Ausgabe -->
<svg style="left:713px;top:107px" width="18" height="17" viewBox="0 0 18 17">
 <rect x="1.5" y="1.5" width="13" height="14" fill="#f4f8fc" stroke="#8a9a9a" stroke-width="1"/>
 <rect x="2.5" y="2.5" width="11" height="3" fill="#4aa8f0"/>
 <g fill="#9cc8ec"><rect x="3" y="7" width="10" height="1"/><rect x="3" y="9" width="10" height="1"/><rect x="3" y="11" width="10" height="1"/><rect x="3" y="13" width="10" height="1"/><rect x="5" y="6" width="1" height="9"/></g>
 <path d="M11 9.5H14V7.5L17.2 10.5L14 13.5V11.5H11Z" fill="#fff" stroke="#8a9a9a" stroke-width="0.8"/>
</svg>
<svg style="left:804px;top:115px" width="5" height="3"><path d="M0 0H5L2.5 3Z" fill="#333"/></svg>
<!-- Schliessen -->
<svg style="left:840px;top:68px" width="32" height="32" viewBox="0 0 32 32">
 <defs><linearGradient id="oct" x1="0" y1="0" x2="0" y2="1"><stop offset="0" stop-color="#e2432c"/><stop offset="1" stop-color="#f7806c"/></linearGradient></defs>
 <path d="M9.3 1.2H22.7L30.8 9.3V22.7L22.7 30.8H9.3L1.2 22.7V9.3Z" fill="url(#oct)" stroke="#c8392a" stroke-width="1.3"/>
 <path d="M10 2.8H22L29.2 10V22L22 29.2H10L2.8 22V10Z" fill="none" stroke="#f49a88" stroke-width="0.6" opacity="0.7"/>
 <path d="M9.5 9.5L22.5 22.5M22.5 9.5L9.5 22.5" stroke="#fff" stroke-width="4.4"/>
</svg>
<!-- bottom tab icons -->
<svg style="left:12px;top:730px" width="17" height="17" viewBox="0 0 17 17">
 <defs><radialGradient id="glb" cx="0.3" cy="0.3" r="0.8"><stop offset="0" stop-color="#9ad8ff"/><stop offset="0.5" stop-color="#3a9ef0"/><stop offset="1" stop-color="#1a6ad0"/></radialGradient></defs>
 <circle cx="8.4" cy="8.5" r="7.6" fill="url(#glb)" stroke="#1a68c8" stroke-width="0.6"/>
 <path d="M5 3.2C6.5 2.6 8.5 2.8 9.5 3.6C10.2 4.8 10 6 9.8 7C9.2 8 10 9.5 9.2 10.5C8 11.5 7 10.8 6.5 9.5C5.8 8 5 6.5 5.3 5Z" fill="#a8e030"/>
 <path d="M9.8 11.5C11 11 12.8 11.5 13.5 12C13 13.8 11.5 15 10.5 15.2C9.8 14 9.5 12.8 9.8 11.5Z" fill="#a8e030"/>
 <path d="M6 1.8C8.5 1.2 12 1.8 14 4.2C14.8 5.5 15 7 14.5 8C13.5 7 13 5.5 12 4.5C10 3.2 8 2.5 6 1.8Z" fill="#a8e030"/>
 <circle cx="2.6" cy="9.5" r="1" fill="#a8e030"/>
</svg>
<svg style="left:116px;top:730px" width="17" height="18" viewBox="0 0 17 18">
 <rect x="6.5" y="1.5" width="9" height="11" fill="#fff" stroke="#1a8ad8" stroke-width="1"/>
 <rect x="8" y="5" width="6" height="2" fill="#3ac0f0"/>
 <rect x="8" y="3" width="3" height="1" fill="#99a"/><rect x="12" y="2.5" width="2" height="2" fill="#3ac0f0"/>
 <rect x="8" y="8" width="6" height="1" fill="#e8a090"/>
 <ellipse cx="4.8" cy="6" rx="3" ry="3.6" fill="#a8602a"/>
 <ellipse cx="4.8" cy="7" rx="2.2" ry="2.6" fill="#f0c880"/>
 <path d="M0.5 16V12.5C0.5 11 2 10 4.8 10C7.6 10 9.2 11 9.2 12.5V16Z" fill="#8a8a8a"/>
 <path d="M3.8 10L4.8 14L5.8 10Z" fill="#222"/>
 <rect x="0.5" y="16" width="9" height="1.5" fill="#5a5a5a"/>
</svg>
<!-- status icons -->
<svg style="left:5px;top:758px" width="17" height="17" viewBox="0 0 17 17">
 <path d="M9 3.5H13.5L15.5 5.5V11H9Z" fill="#fff" stroke="#a8a8a8" stroke-width="0.8"/>
 <path d="M1.5 1.5H11.5V3H2.5Z" fill="#f0d070" stroke="#d8902a" stroke-width="0.8"/>
 <path d="M1.5 1.5L9.5 3V15.5L1.5 14.5Z" fill="#f8d878" stroke="#d8902a" stroke-width="1"/>
 <circle cx="12.6" cy="12.5" r="3.6" fill="#72c02a" stroke="#3a8a10" stroke-width="0.9"/>
</svg>
<svg style="left:310px;top:758px" width="16" height="17" viewBox="0 0 16 17">
 <rect x="1.5" y="2.5" width="13" height="13" rx="1" fill="#fbfbfb" stroke="#666" stroke-width="1"/>
 <rect x="1" y="2" width="14" height="3.2" fill="#e83a2a"/>
 <rect x="4" y="1" width="1.5" height="3" fill="#6aa0c0"/><rect x="10.5" y="1" width="1.5" height="3" fill="#6aa0c0"/>
 <path d="M3 8.5L4.5 10L7 7.5M3 12.5L4.5 14L7 11.5" stroke="#3a9a20" stroke-width="1.2" fill="none"/>
 <g fill="#bbb"><rect x="8" y="8.5" width="2" height="1"/><rect x="11" y="8.5" width="2" height="1"/><rect x="8" y="12.5" width="2" height="1"/><rect x="11" y="12.5" width="2" height="1"/></g>
</svg>
<svg style="left:1064px;top:764px" width="11" height="11"><g fill="#999"><rect x="8" y="2" width="2" height="2"/><rect x="5" y="5" width="2" height="2"/><rect x="8" y="5" width="2" height="2"/><rect x="2" y="8" width="2" height="2"/><rect x="5" y="8" width="2" height="2"/><rect x="8" y="8" width="2" height="2"/></g></svg>

<div class="t" style="left:87.00px;top:11px;color:#fff;letter-spacing:0.022px;">Modulstart</div><div class="t" style="left:145.00px;top:11px;color:#222;letter-spacing:0.011px;">Modulstart</div><div class="t" style="left:473.00px;top:12px;color:#fff;letter-spacing:-0.205px;">Personen -PEP4.Urkawari</div><div class="t" style="left:69.00px;top:42px;color:#fff;letter-spacing:-0.250px;transform:scaleX(0.9379);transform-origin:0 0;">ZEITDATEN</div><div class="t" style="left:150.08px;top:42px;color:#fff;letter-spacing:-0.250px;transform:scaleX(0.9212);transform-origin:0 0;">PLANUNG</div><div class="t" style="left:224.04px;top:42px;color:#fff;letter-spacing:-0.250px;transform:scaleX(0.9621);transform-origin:0 0;">PROVISION</div><div class="t" style="left:309.06px;top:42px;color:#fff;letter-spacing:-0.250px;transform:scaleX(0.9436);transform-origin:0 0;">STAMMDATEN</div><div class="t" style="left:404.05px;top:42px;color:#fff;letter-spacing:-0.250px;transform:scaleX(0.9505);transform-origin:0 0;">PREMIUM</div><div class="t" style="left:480.10px;top:42px;color:#fff;letter-spacing:-0.250px;transform:scaleX(0.8964);transform-origin:0 0;">KOSTENRECHNUNG</div><div class="t" style="left:602.07px;top:42px;color:#fff;letter-spacing:-0.250px;transform:scaleX(0.9263);transform-origin:0 0;">BERICHTE</div><div class="t" style="left:679.00px;top:42px;color:#fff;letter-spacing:-0.250px;transform:scaleX(0.9096);transform-origin:0 0;">AUSWERTUNGEN</div><div class="t" style="left:789.06px;top:42px;color:#fff;letter-spacing:-0.250px;transform:scaleX(0.9375);transform-origin:0 0;">PARAMETER</div><div class="t" style="left:877.09px;top:42px;color:#fff;letter-spacing:-0.250px;transform:scaleX(0.9078);transform-origin:0 0;">EXTRAS</div><div class="t" style="left:940.00px;top:42px;color:#fff;">X</div><div class="t" style="left:13.00px;top:106px;color:#303030;letter-spacing:-0.075px;">Laden</div><div class="t" style="left:58.00px;top:106px;color:#303030;letter-spacing:-0.188px;">Speichern</div><div class="t" style="left:118.00px;top:106px;color:#303030;letter-spacing:-0.025px;">Hilfstabellen</div><div class="t" style="left:122.00px;top:121px;color:#303030;letter-spacing:-0.136px;">Aktualisiern</div><div class="t" style="left:81.00px;top:142px;color:#303030;letter-spacing:0.050px;">Daten</div><div class="t" style="left:282.00px;top:142px;color:#303030;letter-spacing:0.022px;">Navigation</div><div class="t" style="left:443.00px;top:106px;color:#303030;letter-spacing:-0.200px;">Neu</div><div class="t" style="left:481.00px;top:106px;color:#303030;letter-spacing:0.017px;">löschen</div><div class="t" style="left:531.00px;top:106px;color:#303030;letter-spacing:-0.089px;">Datencheck</div><div class="t" style="left:498.00px;top:142px;color:#303030;letter-spacing:-0.140px;">Aktion</div><div class="t" style="left:614.05px;top:106px;color:#303030;letter-spacing:-0.250px;transform:scaleX(0.9500);transform-origin:0 0;">Links</div><div class="t" style="left:654.00px;top:106px;color:#303030;letter-spacing:0.133px;">Kontakt</div><div class="t" style="left:627.00px;top:142px;color:#303030;letter-spacing:-0.150px;">Sonstiges</div><div class="t" style="left:735.00px;top:80px;color:#303030;letter-spacing:-0.117px;">Layout: Basis</div><div class="t" style="left:736.00px;top:110px;color:#303030;letter-spacing:-0.250px;transform:scaleX(0.9855);transform-origin:0 0;">Ausgabe</div><div class="t" style="left:746.00px;top:142px;color:#303030;letter-spacing:0.080px;">Layout</div><div class="t" style="left:833.01px;top:106px;color:#303030;letter-spacing:-0.250px;transform:scaleX(0.9889);transform-origin:0 0;">Schließen</div><div class="t" style="left:278.00px;top:95px;color:#222;letter-spacing:-0.250px;transform:scaleX(0.9882);transform-origin:0 0;">4711 TEST, WEB</div><div class="t" style="left:14.00px;top:163px;color:#303030;letter-spacing:-0.250px;transform:scaleX(0.9609);transform-origin:0 0;">Allgemein</div><div class="t" style="left:13.01px;top:187px;color:#303030;letter-spacing:-0.250px;transform:scaleX(0.9918);transform-origin:0 0;">Personalnummer</div><div class="t" style="left:108.00px;top:187px;color:#8a8a8a;letter-spacing:0.133px;">4711</div><div class="t" style="left:13.04px;top:213px;color:#303030;letter-spacing:-0.250px;transform:scaleX(0.9572);transform-origin:0 0;">Nachname</div><div class="t" style="left:108.00px;top:213px;color:#222;letter-spacing:-0.250px;transform:scaleX(0.8073);transform-origin:0 0;">TEST</div><div class="t" style="left:270.00px;top:213px;color:#303030;letter-spacing:-0.250px;transform:scaleX(0.9859);transform-origin:0 0;">Vorname</div><div class="t" style="left:323.00px;top:213px;color:#222;letter-spacing:-0.250px;transform:scaleX(0.8163);transform-origin:0 0;">WEB</div><div class="t" style="left:13.00px;top:250px;color:#303030;letter-spacing:-0.225px;">Übersicht</div><div class="t" style="left:83.00px;top:250px;color:#222;letter-spacing:-0.250px;transform:scaleX(0.9652);transform-origin:0 0;">Allgemein</div><div class="t" style="left:154.00px;top:250px;color:#303030;letter-spacing:0.008px;">Adresse / Info</div><div class="t" style="left:246.00px;top:250px;color:#303030;letter-spacing:-0.250px;transform:scaleX(0.9913);transform-origin:0 0;">Zeit</div><div class="t" style="left:288.00px;top:250px;color:#303030;letter-spacing:-0.250px;transform:scaleX(0.9951);transform-origin:0 0;">Waz</div><div class="t" style="left:332.00px;top:250px;color:#303030;letter-spacing:-0.091px;">Organisation</div><div class="t" style="left:415.00px;top:250px;color:#303030;letter-spacing:0.350px;">Pep</div><div class="t" style="left:457.00px;top:250px;color:#303030;letter-spacing:0.000px;">Sonderaufgaben</div><div class="t" style="left:559.00px;top:250px;color:#303030;letter-spacing:-0.250px;transform:scaleX(0.9991);transform-origin:0 0;">PepGrenzen</div><div class="t" style="left:641.00px;top:250px;color:#303030;letter-spacing:-0.150px;">Zahlung</div><div class="t" style="left:702.00px;top:250px;color:#303030;letter-spacing:-0.030px;">Stundenlohn</div><div class="t" style="left:786.00px;top:250px;color:#303030;letter-spacing:-0.020px;">Urlaub</div><div class="t" style="left:841.00px;top:250px;color:#303030;letter-spacing:-0.064px;">Sonderurlaub</div><div class="t" style="left:929.00px;top:250px;color:#303030;letter-spacing:-0.154px;">Freie Samstage</div><div class="t" style="left:1028.07px;top:250px;color:#303030;letter-spacing:-0.250px;transform:scaleX(0.9290);transform-origin:0 0;">Pı</div><div class="t" style="left:42.00px;top:286px;color:#303030;letter-spacing:-0.136px;">Geburtsdatum</div><div class="t" style="left:120.00px;top:286px;color:#222;letter-spacing:0.033px;">07.04.2020</div><div class="t" style="left:77.00px;top:312px;color:#303030;letter-spacing:0.214px;">Eintritt</div><div class="t" style="left:120.00px;top:312px;color:#222;letter-spacing:0.033px;">01.01.2000</div><div class="t" style="left:240.00px;top:312px;color:#303030;letter-spacing:-0.250px;transform:scaleX(0.9955);transform-origin:0 0;">aktiv</div><div class="t" style="left:16.00px;top:338px;color:#303030;letter-spacing:0.072px;">Start Zeiterfassung</div><div class="t" style="left:120.00px;top:338px;color:#222;letter-spacing:0.033px;">01.01.2000</div><div class="t" style="left:240.00px;top:338px;color:#303030;letter-spacing:-0.250px;transform:scaleX(0.9955);transform-origin:0 0;">aktiv</div><div class="t" style="left:64.00px;top:364px;color:#303030;letter-spacing:-0.050px;">Start Pep</div><div class="t" style="left:120.00px;top:364px;color:#222;letter-spacing:0.033px;">01.01.2000</div><div class="t" style="left:240.00px;top:364px;color:#303030;letter-spacing:-0.250px;transform:scaleX(0.9955);transform-origin:0 0;">aktiv</div><div class="t" style="left:37.00px;top:390px;color:#303030;letter-spacing:-0.200px;">Ende Probezeit</div><div class="t" style="left:119.00px;top:390px;color:#222;letter-spacing:0.144px;">30.06.2000</div><div class="t" style="left:32.00px;top:416px;color:#303030;letter-spacing:-0.079px;">Ende Befristung</div><div class="t" style="left:74.00px;top:442px;color:#303030;letter-spacing:0.214px;">Austritt</div><div class="t" style="left:267.01px;top:286px;color:#303030;letter-spacing:-0.250px;transform:scaleX(0.9917);transform-origin:0 0;">Sozialversicherungsnummer</div><div class="t" style="left:307.01px;top:312px;color:#303030;letter-spacing:-0.250px;transform:scaleX(0.9926);transform-origin:0 0;">Personalnummer 1</div><div class="t" style="left:307.00px;top:338px;color:#303030;letter-spacing:-0.213px;">Personalnummer 2</div><div class="t" style="left:309.00px;top:364px;color:#303030;letter-spacing:-0.250px;transform:scaleX(0.8367);transform-origin:0 0;">TEST</div><div class="t" style="left:346.00px;top:390px;color:#303030;letter-spacing:-0.167px;">Aprocon ID</div><div class="t" style="left:410.00px;top:390px;color:#222;">0</div><div class="t" style="left:325.01px;top:416px;color:#303030;letter-spacing:-0.250px;transform:scaleX(0.9886);transform-origin:0 0;">Kundennummer</div><div class="t" style="left:410.00px;top:416px;color:#222;">0</div><div class="t" style="left:649.00px;top:286px;color:#303030;letter-spacing:-0.043px;">Saldoart</div><div class="t" style="left:702.00px;top:286px;color:#222;">0</div><div class="t" style="left:605.00px;top:312px;color:#303030;letter-spacing:-0.227px;">Abrechnungskreis</div><div class="t" style="left:702.00px;top:312px;color:#222;">0</div><div class="t" style="left:614.00px;top:338px;color:#303030;letter-spacing:-0.007px;">Mitarbeiterkreis</div><div class="t" style="left:702.00px;top:338px;color:#222;">0</div><div class="t" style="left:624.00px;top:364px;color:#303030;letter-spacing:-0.109px;">Pauschalwert</div><div class="t" style="left:702.00px;top:364px;color:#222;">0,00</div><div class="t" style="left:707.00px;top:391px;color:#303030;letter-spacing:0.022px;">Verteilung</div><div class="t" style="left:698.00px;top:412px;color:#303030;letter-spacing:-0.150px;">Transparent</div><div class="t" style="left:723.00px;top:435px;color:#303030;letter-spacing:0.380px;">Extern</div><div class="t" style="left:27.00px;top:486px;color:#303030;letter-spacing:-0.171px;">Führungszeugnis</div><div class="t" style="left:56.00px;top:512px;color:#303030;letter-spacing:-0.022px;">Erinnerung</div><div class="t" style="left:59.01px;top:538px;color:#303030;letter-spacing:-0.250px;transform:scaleX(0.9918);transform-origin:0 0;">EU-Bürger</div><div class="t" style="left:22.00px;top:564px;color:#303030;letter-spacing:-0.200px;">Gültigkeit Ausweis</div><div class="t" style="left:35.00px;top:590px;color:#303030;letter-spacing:0.080px;">Aufenthaltstitel</div><div class="t" style="left:56.00px;top:616px;color:#303030;letter-spacing:-0.067px;">Erinnerung</div><div class="t" style="left:4.00px;top:641px;color:#303030;letter-spacing:-0.189px;">Studienbescheinigung</div><div class="t" style="left:56.00px;top:667px;color:#303030;letter-spacing:-0.067px;">Erinnerung</div><div class="t" style="left:340.00px;top:486px;color:#303030;letter-spacing:-0.250px;">Transponder</div><div class="t" style="left:331.00px;top:512px;color:#303030;letter-spacing:-0.225px;">Transponder 2</div><div class="t" style="left:385.00px;top:538px;color:#303030;letter-spacing:-0.150px;">Pin</div><div class="t" style="left:321.00px;top:564px;color:#303030;letter-spacing:-0.086px;">Fingerabdruck 1</div><div class="t" style="left:321.00px;top:590px;color:#303030;letter-spacing:-0.064px;">Fingerabdruck 2</div><div class="t" style="left:410.00px;top:486px;color:#222;">0</div><div class="t" style="left:409.00px;top:538px;color:#222;">623456</div><div class="t" style="left:531.00px;top:540px;color:#222;letter-spacing:-0.188px;">Web Pin generieren</div><div class="t" style="left:32.00px;top:733px;color:#5a5a5a;letter-spacing:-0.250px;transform:scaleX(0.9778);transform-origin:0 0;">WebZerf</div><div class="t" style="left:133.00px;top:733px;color:#fff;letter-spacing:-0.157px;">Personen</div><div class="t" style="left:27.00px;top:760px;color:#222;letter-spacing:-0.157px;">15:42 Daten wurden geladen @formPersonenStamm</div><div class="t" style="left:332.00px;top:760px;color:#222;letter-spacing:-0.034px;">2 offene Reminder mit 11 Aufgaben</div><div class="t" style="left:777.00px;top:760px;color:#222;letter-spacing:-0.197px;">User: sa, DB:PEP4, Server:MCWIN10</div><div class="t" style="left:970.00px;top:760px;color:#222;letter-spacing:0.121px;">V4.117.0.0(584)</div>
</body></html>
